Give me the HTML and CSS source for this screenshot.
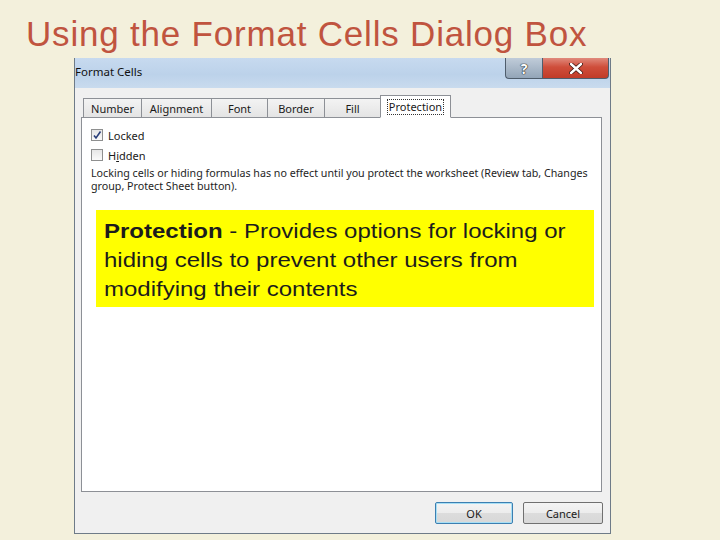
FILE: index.html
```html
<!DOCTYPE html>
<html>
<head>
<meta charset="utf-8">
<link rel="stylesheet" href="styles.css">
</head>
<body>
<div class="slide">
  <h1 class="title">Using the Format Cells Dialog Box</h1>
  <div class="dialog">
    <div class="titlebar">
      <span class="caption">Format Cells</span>
      <div class="ctrls">
        <span class="btn-help">?</span>
        <span class="btn-close">
          <svg width="14" height="11" viewBox="0 0 14 11"><path d="M2 1 L12 10 M12 1 L2 10" stroke="#3b1510" stroke-width="4" stroke-linecap="round"/><path d="M2 1 L12 10 M12 1 L2 10" stroke="#ffffff" stroke-width="2.4" stroke-linecap="round"/></svg>
        </span>
      </div>
    </div>
    <div class="dlg-body">
      <div class="tabs">
        <span class="tab t-number">Number</span>
        <span class="tab t-align">Alignment</span>
        <span class="tab t-font">Font</span>
        <span class="tab t-border">Border</span>
        <span class="tab t-fill">Fill</span>
        <span class="tab t-prot active"><span class="focus">Protection</span></span>
      </div>
      <div class="panel">
        <div class="check"><span class="box checked"><svg width="10" height="10" viewBox="0 0 10 10"><path d="M2 5.5 L4 8 L8.5 1.5" stroke="#2a3f7a" stroke-width="1.6" fill="none"/></svg></span><span>Locked</span></div>
        <div class="check"><span class="box"></span><span>H<span class="ul">i</span>dden</span></div>
        <p class="info">Locking cells or hiding formulas has no effect until you protect the worksheet (Review tab, Changes group, Protect Sheet button).</p>
      </div>
      <div class="buttons">
        <span class="btn ok">OK</span>
        <span class="btn cancel">Cancel</span>
      </div>
    </div>
    <div class="note">
      <div class="note-line"><b>Protection</b><span> - Provides options for locking or</span></div>
      <div class="note-line">hiding cells to prevent other users from</div>
      <div class="note-line">modifying their contents</div>
    </div>
  </div>
</div>
</body>
</html>
```
FILE: styles.css
```css
html, body {
  margin: 0;
  padding: 0;
}
body {
  width: 720px;
  height: 540px;
  overflow: hidden;
  background: #f3f0dc;
}
.slide {
  padding: 14px 0 0 26px;
}
.title {
  margin: 0;
  font-family: "Liberation Sans", Arial, sans-serif;
  font-weight: normal;
  font-size: 35px;
  line-height: 40px;
  letter-spacing: 0.8px;
  color: #c0543f;
  white-space: nowrap;
}
.dialog {
  position: relative;
  margin: 4px 0 0 48px;
  width: 535px;
  height: 475px;
  border: 1px solid #6e7b88;
  border-top: none;
  background: #f0f0f0;
  font-family: "Noto Sans", "DejaVu Sans", sans-serif;
  color: #1a1a1a;
}
.titlebar {
  height: 30px;
  display: flex;
  justify-content: space-between;
  align-items: flex-start;
  background: linear-gradient(to bottom, #c7daef 0%, #bcd2ea 55%, #c9dbee 100%);
}
.caption {
  font-size: 11.5px;
  line-height: 14px;
  padding: 7px 0 0 0;
  color: #111;
}
.ctrls {
  display: flex;
  margin-right: 1px;
}
.btn-help, .btn-close {
  height: 20px;
  display: flex;
  align-items: center;
  justify-content: center;
  border: 1px solid #4f5d6c;
  border-top: none;
}
.btn-help {
  width: 36px;
  border-right: none;
  border-radius: 0 0 0 4px;
  background: linear-gradient(to bottom, #c0ccd9, #93a5b8);
  color: #fff;
  font-size: 14px;
  font-weight: bold;
  text-shadow: 0 0 1px #222, 0 0 1px #222, 0 0 1px #222;
}
.btn-close {
  width: 65px;
  border-radius: 0 0 4px 0;
  background: linear-gradient(to bottom, #e08a7c 0%, #cf4e3b 45%, #c13b28 100%);
}
.dlg-body {
  padding: 8px 8px 0 6px;
}
.tabs {
  height: 22px;
  display: flex;
  align-items: flex-end;
  padding-left: 2px;
  position: relative;
  z-index: 2;
  margin-bottom: -1px;
}
.tab {
  box-sizing: border-box;
  height: 20px;
  margin-right: -1px;
  border: 1px solid #8d9096;
  background: linear-gradient(to bottom, #f3f3f3, #e4e4e4);
  font-size: 11px;
  line-height: 19px;
  text-align: center;
  color: #1a1a1a;
}
.t-number { width: 59px; }
.t-align { width: 71px; }
.t-font { width: 57px; }
.t-border { width: 58px; }
.t-fill { width: 57px; }
.t-prot { width: 71px; }
.tab.active {
  height: 23px;
  background: #fff;
  border-bottom-color: #fff;
  padding-top: 1px;
}
.focus {
  border: 1px dotted #333;
  padding: 0 1px;
  line-height: 14px;
  display: inline-block;
}
.panel {
  box-sizing: border-box;
  height: 375px;
  background: #fff;
  border: 1px solid #8d9096;
  padding: 7px 8px 0 9px;
}
.check {
  height: 20px;
  display: flex;
  align-items: center;
  gap: 5px;
  font-size: 11px;
}
.box {
  box-sizing: border-box;
  width: 12px;
  height: 12px;
  border: 1px solid #8e8f8f;
  background: linear-gradient(to bottom, #e6e6e6, #fafafa);
  display: flex;
  align-items: center;
  justify-content: center;
}
.ul {
  text-decoration: underline;
}
.info {
  margin: 2px 0 0 0;
  font-size: 10.7px;
  line-height: 13px;
  color: #1e1e1e;
}
.buttons {
  display: flex;
  justify-content: flex-end;
  gap: 10px;
  margin: 10px -1px 0 0;
}
.btn {
  box-sizing: border-box;
  height: 22px;
  display: flex;
  align-items: center;
  justify-content: center;
  border: 1px solid #707070;
  border-radius: 2px;
  background: linear-gradient(to bottom, #f4f4f4 0%, #ececec 50%, #dcdcdc 51%, #d8d8d8 100%);
  font-size: 11px;
  color: #1a1a1a;
}
.ok {
  width: 78px;
  border-color: #3c7fb1;
  box-shadow: inset 0 0 0 1px #a8dff5;
}
.cancel {
  width: 80px;
}
.note {
  position: absolute;
  left: 21px;
  top: 152px;
  width: 498px;
  height: 97px;
  box-sizing: border-box;
  background: #ffff00;
  padding: 7px 0 0 8px;
}
.note-line {
  font-family: "Liberation Sans", Arial, sans-serif;
  font-size: 20px;
  line-height: 29px;
  color: #1c1c1c;
  white-space: nowrap;
  transform: scaleX(1.2);
  transform-origin: 0 0;
}
```
